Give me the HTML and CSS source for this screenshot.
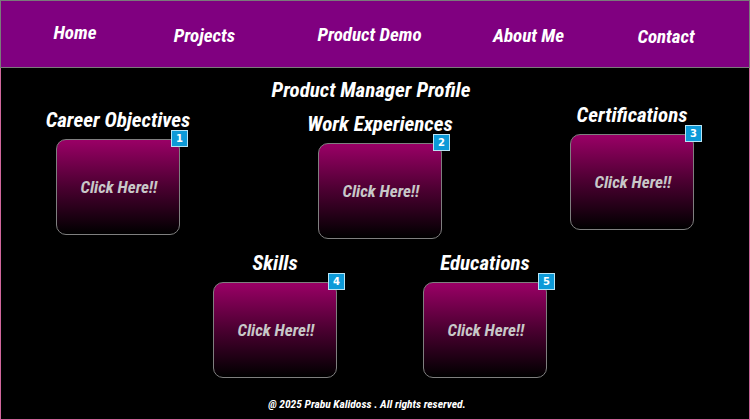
FILE: index.html
```html
<!DOCTYPE html>
<html lang="en">
<head>
<meta charset="utf-8">
<title>Product Manager Profile</title>
<link rel="stylesheet" href="styles.css">
</head>
<body>
<header class="topbar">
  <nav class="nav">
    <a class="nav-link nl-home" href="#">Home</a>
    <a class="nav-link nl-projects" href="#">Projects</a>
    <a class="nav-link nl-demo" href="#">Product Demo</a>
    <a class="nav-link nl-about" href="#">About Me</a>
    <a class="nav-link nl-contact" href="#">Contact</a>
  </nav>
</header>
<main class="content">
  <h1 class="page-title">Product Manager Profile</h1>
  <div class="row row-top">
    <section class="tile tile-career">
      <h2 class="tile-title">Career Objectives</h2>
      <a class="card" href="#"><span class="badge">1</span><span class="card-text">Click Here!!</span></a>
    </section>
    <section class="tile tile-work">
      <h2 class="tile-title">Work Experiences</h2>
      <a class="card" href="#"><span class="badge">2</span><span class="card-text">Click Here!!</span></a>
    </section>
    <section class="tile tile-cert">
      <h2 class="tile-title">Certifications</h2>
      <a class="card" href="#"><span class="badge">3</span><span class="card-text">Click Here!!</span></a>
    </section>
  </div>
  <div class="row row-bottom">
    <section class="tile tile-skills">
      <h2 class="tile-title">Skills</h2>
      <a class="card" href="#"><span class="badge">4</span><span class="card-text">Click Here!!</span></a>
    </section>
    <section class="tile tile-edu">
      <h2 class="tile-title">Educations</h2>
      <a class="card" href="#"><span class="badge">5</span><span class="card-text">Click Here!!</span></a>
    </section>
  </div>
  <footer class="footer">@ 2025 Prabu Kalidoss . All rights reserved.</footer>
</main>
</body>
</html>
```
FILE: styles.css
```css
* { box-sizing: border-box; margin: 0; padding: 0; }
html, body { width: 750px; height: 420px; overflow: hidden; }
body {
  background: #000;
  font-family: "Roboto Condensed", Roboto, "Liberation Sans", sans-serif;
  font-stretch: condensed;
  font-weight: 700;
  font-style: italic;
  color: #fff;
  display: flex;
  flex-direction: column;
}
.topbar {
  height: 68px;
  background: #800080;
  border: 1px solid #7a7a7a;
}
.nav {
  display: flex;
  height: 100%;
  align-items: center;
  overflow: hidden;
}
.nav-link {
  flex-shrink: 0;
  color: #fff;
  text-decoration: none;
  font-size: 19px;
  text-align: center;
}
.nl-home { width: 148px; margin-top: -3px; }
.nl-projects { width: 111px; margin-top: 3px; }
.nl-demo { width: 219px; margin-top: 0; }
.nl-about { width: 99px; margin-top: 3px; }
.nl-contact { width: 176px; margin-top: 4px; }
.content {
  flex: 1;
  border: 1px solid #d0679c;
  border-top: 0;
  display: flex;
  flex-direction: column;
}
.page-title {
  font-size: 21px;
  text-align: center;
  margin-top: 10px;
  line-height: 24px;
  padding-right: 8px;
}
.tile { display: flex; flex-direction: column; align-items: center; }
.tile-title { font-size: 21px; line-height: 24px; margin-bottom: 7px; }
.card {
  position: relative;
  width: 124px;
  height: 96px;
  border: 1px solid #7f7f7f;
  border-radius: 10px;
  background: linear-gradient(to bottom, #9a0066 0%, #4a0030 50%, #000 100%);
  display: flex;
  align-items: center;
  justify-content: center;
  text-decoration: none;
}
.card-text { color: #c8c8c8; font-size: 17px; padding-left: 2px; }
.badge {
  position: absolute;
  top: -10px;
  right: -9px;
  width: 17px;
  height: 17px;
  background: #0d9ad8;
  border: 1px solid #b8e4f4;
  color: #fff;
  font-family: "DejaVu Sans", sans-serif;
  font-style: normal;
  font-stretch: normal;
  font-size: 10px;
  display: flex;
  align-items: center;
  justify-content: center;
}
.row { display: flex; }
.row-top { margin-top: 6px; }
.tile-career { width: 234px; }
.tile-work { width: 290px; margin-top: 4px; }
.tile-cert { width: 214px; margin-top: -5px; }
.row-bottom { justify-content: center; padding-left: 10px; gap: 50px; margin-top: 12px; }
.row-bottom .tile { width: 160px; }
.footer {
  margin-top: auto;
  text-align: center;
  font-size: 11.5px;
  padding-bottom: 8px;
  padding-right: 16px;
}
```
